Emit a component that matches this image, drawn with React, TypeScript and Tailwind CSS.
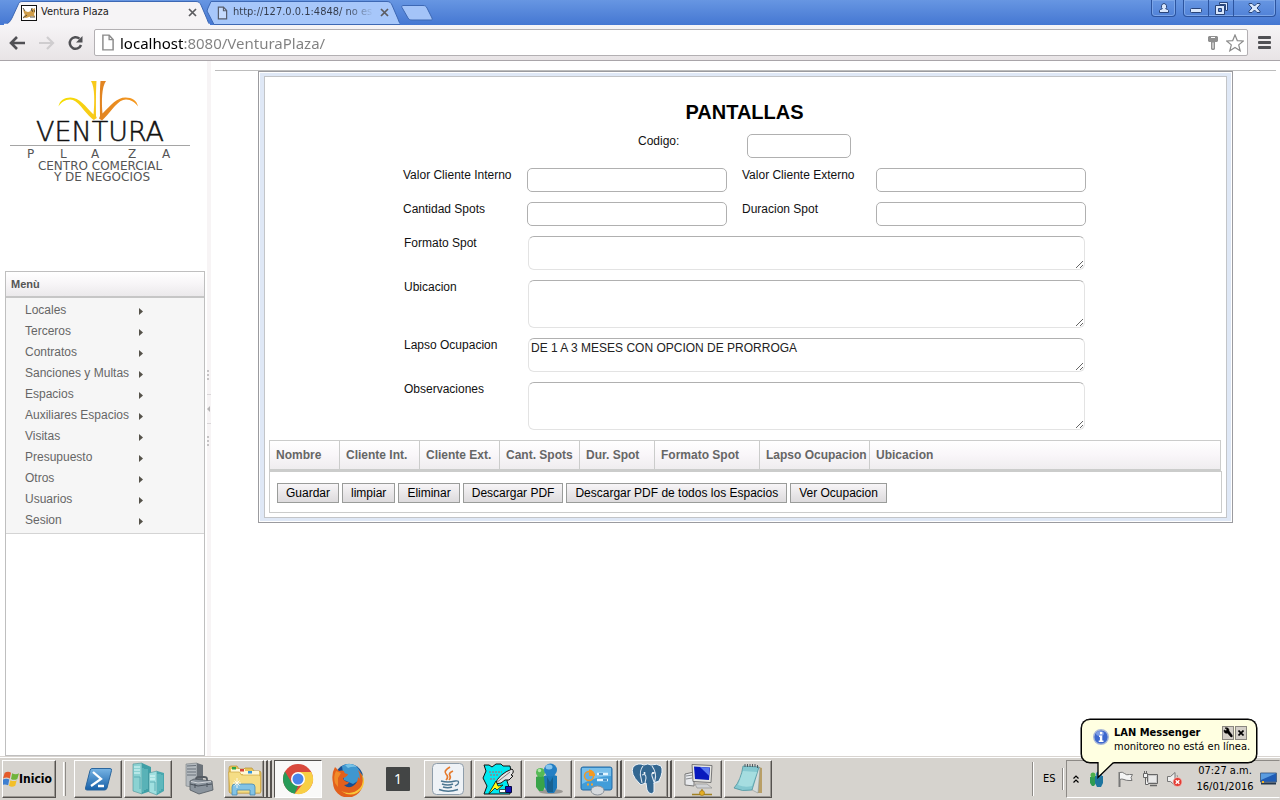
import type { ReactNode } from "react";

const MENU = [
  "Locales",
  "Terceros",
  "Contratos",
  "Sanciones y Multas",
  "Espacios",
  "Auxiliares Espacios",
  "Visitas",
  "Presupuesto",
  "Otros",
  "Usuarios",
  "Sesion",
];

const COLUMNS = [
  { title: "Nombre", width: "w-[70px]" },
  { title: "Cliente Int.", width: "w-20" },
  { title: "Cliente Ext.", width: "w-20" },
  { title: "Cant. Spots", width: "w-20" },
  { title: "Dur. Spot", width: "w-[75px]" },
  { title: "Formato Spot", width: "w-[105px]" },
  { title: "Lapso Ocupacion", width: "w-[110px]" },
  { title: "Ubicacion", width: "w-auto" },
];

const ACTIONS = [
  "Guardar",
  "limpiar",
  "Eliminar",
  "Descargar PDF",
  "Descargar PDF de todos los Espacios",
  "Ver Ocupacion",
];

const UI_FONT = "font-['DejaVu_Sans_Condensed','Noto_Sans',sans-serif]";

/* ---------- Browser chrome ---------- */

function CloseGlyph() {
  return (
    <svg viewBox="0 0 9 9" className="size-[9px]" aria-hidden="true">
      <path d="M1 1l7 7M8 1L1 8" stroke="#5b5b5f" strokeWidth="1.7" />
    </svg>
  );
}

function PageGlyph({ className, stroke }: { className: string; stroke: string }) {
  return (
    <svg viewBox="0 0 12 15" className={className} aria-hidden="true">
      <path d="M1.5 1h5.5l3.5 3.8V14h-9z" fill="#fff" fillOpacity=".35" stroke={stroke} strokeWidth="1.3" />
      <path d="M7 1v4h3.5" fill="none" stroke={stroke} strokeWidth="1.2" />
    </svg>
  );
}

function TitleBar() {
  return (
    <header className={`flex h-[25px] bg-linear-to-b from-[#6796e2] to-[#4577d2] text-[11px] ${UI_FONT}`}>
      <div className="relative ml-1 flex h-[25px] w-[204px] shrink-0 items-center pr-[11px] pl-[17px]">
        <svg viewBox="0 0 206 25" className="absolute top-0 left-0 h-[25px] w-[206px]" aria-hidden="true">
          <path d="M0 25C4 24 6 22 8 18L14 5C15 2 16 1.500 19 1.500H192C195 1.500 196 3 197 5L203 19C204 22 205 24 206 25z" fill="#f6f4f6" stroke="#3d68b4" strokeWidth="1" />
          <path d="M0 24.500H206" stroke="#f6f4f6" strokeWidth="1.500" />
        </svg>
        <svg viewBox="0 0 16 16" className="relative size-4" aria-hidden="true">
          <rect x=".5" y=".5" width="15" height="15" fill="#fff" stroke="#111" />
          <path d="M2 4l2 2 3 1 3-1 1-3 1 1 2-1 0 4-1 2 1 3-3-1-3 1-3 1-3-1 2-2-1-2z" fill="#cf9d4a" />
          <path d="M2 3l2 3M2 13l4-3M10 6l1-3M9 12l5 0" stroke="#4a4336" strokeWidth=".9" fill="none" />
          <path d="M11 6h1M13 6h1" stroke="#222" />
        </svg>
        <span className="relative ml-1 flex-1 text-[#222]">Ventura Plaza</span>
        <button type="button" aria-label="Cerrar Ventura Plaza" className="relative">
          <CloseGlyph />
        </button>
      </div>
      <div className="relative flex h-[25px] w-[190px] shrink-0 items-center pr-[9px] pl-[9px]">
        <svg viewBox="0 0 196 25" className="absolute top-0 -left-1 h-[25px] w-[196px]" aria-hidden="true">
          <path d="M4 8L7 1.500H183C186 1.500 187 3 188 5L194 19C195 22 196 24 197 24.500H10L3 11z" fill="#a7c7fa" stroke="#3d68b4" strokeWidth="1" />
        </svg>
        <PageGlyph className="relative h-[14px] w-[11px]" stroke="#555c6b" />
        <span className="relative ml-[5px] w-[141px] overflow-hidden bg-linear-to-r from-[#333b4b] from-80% to-[#a7c7fa] bg-clip-text whitespace-nowrap text-transparent">
          http://127.0.0.1:4848/ no es
        </span>
        <button type="button" aria-label="Cerrar pestaña" className="relative ml-auto">
          <CloseGlyph />
        </button>
      </div>
      <button type="button" aria-label="Nueva pestaña" className="mt-[5px] ml-[3px] h-4 w-8 shrink-0">
        <svg viewBox="0 0 32 16" className="h-4 w-8" aria-hidden="true">
          <path d="M2 .5H22C24 .5 25 1 26 3L31 13C31.500 14.500 31 15 30 15H11C9 15 8 14.500 7 13L1 2.500C.5 1 1 .5 2 .5z" fill="#a4c4f8" stroke="#3d68b4" />
        </svg>
      </button>
      <div className="ml-auto flex items-start pr-1">
        <button type="button" aria-label="Usuario" className="mr-[7px] flex h-[17px] w-[25px] items-center justify-center rounded-b-[4px] border border-t-0 border-[#2c549f] shadow-[inset_0_0_0_1px_#7ba5e8]">
          <svg viewBox="0 0 12 12" className="size-3" aria-hidden="true">
            <path d="M1.500 10.500V8.500Q2 7.200 4.300 6.800Q3 5.500 3.500 3.700Q4.200 1.500 6 1.500T8.500 3.700Q9 5.500 7.700 6.800Q10 7.200 10.500 8.500V10.500z" fill="#d9e7fc" stroke="#294479" />
          </svg>
        </button>
        <div className="flex h-[17px] divide-x divide-[#2c549f] overflow-hidden rounded-b-[4px] border border-t-0 border-[#2c549f] shadow-[inset_0_0_0_1px_#7ba5e8]">
          <button type="button" aria-label="Minimizar" className="flex w-[25px] items-center justify-center">
            <svg viewBox="0 0 12 12" className="size-3" aria-hidden="true">
              <rect x=".5" y="6.500" width="11" height="4" rx="1" fill="#d9e7fc" stroke="#294479" />
            </svg>
          </button>
          <button type="button" aria-label="Restaurar" className="flex w-[25px] items-center justify-center">
            <svg viewBox="0 0 13 13" className="size-[13px]" aria-hidden="true">
              <path d="M4.500.5h8v8h-2v-6h-6z" fill="#d9e7fc" stroke="#294479" />
              <path fillRule="evenodd" d="M1 3.500h8.500V12.500H.5V3.500zM3.500 6.500v3h3v-3z" fill="#d9e7fc" stroke="#294479" />
            </svg>
          </button>
          <button type="button" aria-label="Cerrar" className="flex w-[41px] items-center justify-center">
            <svg viewBox="0 0 13 12" className="h-3 w-[13px]" aria-hidden="true">
              <path d="M1 1.500h3L6.500 4 9 1.500h3v1.300L9 6l3 3.200v1.300H9L6.500 8 4 10.500H1V9.200L4 6 1 2.800z" fill="#d9e7fc" stroke="#294479" />
            </svg>
          </button>
        </div>
      </div>
    </header>
  );
}

function Toolbar() {
  return (
    <div className="flex h-9 items-center border-b border-[#a9a5a9] bg-linear-to-b from-[#f6f4f6] to-[#e8e4e6] pr-2 pl-[9px]">
      <button type="button" aria-label="Atrás">
        <svg viewBox="0 0 17 14" className="h-[14px] w-[17px]" aria-hidden="true">
          <path d="M8 1L2 7l6 6M2.500 7H16" fill="none" stroke="#505054" strokeWidth="2.600" />
        </svg>
      </button>
      <button type="button" aria-label="Adelante" className="ml-3">
        <svg viewBox="0 0 17 14" className="h-[14px] w-[17px]" aria-hidden="true">
          <path d="M9 1l6 6-6 6M14.500 7H1" fill="none" stroke="#cfcdcf" strokeWidth="2.200" />
        </svg>
      </button>
      <button type="button" aria-label="Recargar" className="ml-3">
        <svg viewBox="0 0 17 16" className="h-4 w-[17px]" aria-hidden="true">
          <path d="M12.500 3.700A5.800 5.800 0 1 0 14 10" fill="none" stroke="#505054" strokeWidth="2.500" />
          <path d="M15.500 1v6.500H9z" fill="#505054" />
        </svg>
      </button>
      <div className="ml-[10px] flex h-[27px] flex-1 items-center rounded-[2px] border border-[#b3b0b3] bg-white pr-[3px] pl-[6px]">
        <PageGlyph className="h-[17px] w-[14px]" stroke="#8b8b8b" />
        <input
          aria-label="Dirección"
          defaultValue="localhost:8080/VenturaPlaza/"
          className="ml-[5px] h-6 min-w-0 flex-1 bg-linear-to-r from-black from-[64px] to-[#808080] to-[64px] bg-clip-text font-['Noto_Sans',sans-serif] text-[15px] text-transparent outline-none"
        />
        <svg viewBox="0 0 10 16" className="h-4 w-[10px]" aria-hidden="true">
          <path fillRule="evenodd" d="M1 1h8l1 1v4L9 7H7v7l-1 1H4l-1-1V7H1L0 6V2zM3 2v1h4V2zM4.500 7.500v6h1v-6z" fill="#8f8f8f" />
        </svg>
        <button type="button" aria-label="Favoritos" className="ml-2">
          <svg viewBox="0 0 18 18" className="size-[18px]" aria-hidden="true">
            <path d="M9 1l2.300 5.600 6 .4-4.600 3.900 1.500 5.900L9 13.500l-5.200 3.300 1.500-5.900L.7 7l6-.4z" fill="#fff" stroke="#8a8a8a" strokeWidth="1.200" />
          </svg>
        </button>
      </div>
      <button type="button" aria-label="Menú de Chrome" className="ml-[10px] pr-px">
        <svg viewBox="0 0 13 13" className="size-[13px]" aria-hidden="true">
          <path d="M1 1.500h11M1 6.500h11M1 11.500h11" stroke="#505054" strokeWidth="2.800" strokeLinecap="round" />
        </svg>
      </button>
    </div>
  );
}

/* ---------- Page ---------- */

function Logo() {
  return (
    <svg viewBox="0 0 180 104" className="h-[104px] w-[180px]" role="img" aria-label="Ventura Plaza">
      <defs>
        <linearGradient id="gold" x1="0" x2="1">
          <stop offset="0" stopColor="#f5e000" />
          <stop offset="1" stopColor="#f8c81d" />
        </linearGradient>
        <linearGradient id="amber" x1="0" x2="1">
          <stop offset="0" stopColor="#e08322" />
          <stop offset="1" stopColor="#f79a1e" />
        </linearGradient>
      </defs>
      <path d="M81 2h5.500C85.800 12 86 26 86 37l.8 2-3 2-2-1.500C74 33 68 20.500 60 20.500c-5 0-9 3-11.500 7 1-6 6-9 12-9 9 0 15 9 23 17C84.500 24 85 8 81 2z" fill="url(#gold)" />
      <path d="M96 2h-5.500c-1 10-.5 24-.5 35l-1 2.500 3 2 2-2c8-8 14-19 22-19 5 0 9 3 12 7-1-6-6-9-12.500-9-9 0-15 8-23 16C91.500 23 91.500 8 96 2z" fill="url(#amber)" />
      <text x="90" y="62" textAnchor="middle" fontSize="27" fontFamily="'DejaVu Sans',sans-serif" fontWeight="200" fill="#111" stroke="#111" strokeWidth=".5">
        VENTURA
      </text>
      <path d="M0 66.500H180" stroke="#a5a5a5" />
      <g fontFamily="'DejaVu Sans',sans-serif" fontSize="12" fill="#555">
        <text x="17" y="79">P</text>
        <text x="50" y="79">L</text>
        <text x="81" y="79">A</text>
        <text x="118" y="79">Z</text>
        <text x="152" y="79">A</text>
        <text x="90" y="91" textAnchor="middle">
          CENTRO COMERCIAL
        </text>
        <text x="92" y="102" textAnchor="middle">
          Y DE NEGOCIOS
        </text>
      </g>
    </svg>
  );
}

function Sidebar() {
  return (
    <aside className="flex w-[205px] shrink-0 flex-col pl-[5px]">
      <div className="h-[210px] pt-[18px] pl-[5px]">
        <Logo />
      </div>
      <nav aria-label="Menù" className="flex-1 border border-[#bfbfbf]">
        <h2 className="h-[26px] border-b-2 border-[#c6c6c6] bg-linear-to-b from-white via-[#f7f5f7] to-[#ebe9eb] pl-[5px] text-[11px] leading-[25px] font-bold text-[#555]">
          Menù
        </h2>
        <ul className="border-b border-[#d4d4d4] bg-[#f6f6f6] pt-px pb-[3px]">
          {MENU.map((item) => (
            <li key={item}>
              <a href="#" className="flex h-[21px] items-center pl-[19px] text-xs text-[#666]">
                <span className="w-[114px] whitespace-nowrap">{item}</span>
                <svg viewBox="0 0 4 7" className="mt-[3px] h-[7px] w-1" aria-hidden="true">
                  <path d="M0 0l4 3.500L0 7z" fill="#55524a" />
                </svg>
              </a>
            </li>
          ))}
        </ul>
      </nav>
    </aside>
  );
}

function Splitter() {
  return (
    <div className="flex w-1.5 shrink-0 flex-col items-end">
      <div className="flex w-1 flex-1 flex-col items-start bg-[#f7f4f5] pt-[309px]">
        <svg viewBox="0 0 4 76" className="h-[76px] w-1" aria-hidden="true">
          <path d="M0 0h2v2H0zM0 4h2v2H0zM0 8h2v2H0zM0 66h2v2H0zM0 70h2v2H0zM0 74h2v2H0z" fill="#c5c3c4" />
          <path d="M0 24.500h4M0 53.500h4" stroke="#d9d6d8" />
          <path d="M3 36v6L0 39z" fill="#b5b3b4" />
        </svg>
      </div>
    </div>
  );
}

function TextField({ id, label }: { id: string; label: string }) {
  return (
    <>
      <label htmlFor={id} className="leading-[14px]">
        {label}
      </label>
      <input id={id} className="h-6 w-full rounded-[5px] border border-[#b0b0b0] bg-white px-1 outline-none" />
    </>
  );
}

function TextArea({ id, label, tall, value }: { id: string; label: string; tall?: boolean; value?: string }) {
  return (
    <>
      <label htmlFor={id} className="leading-[14px]">
        {label}
      </label>
      <textarea
        id={id}
        defaultValue={value}
        className={`${tall ? "h-12" : "h-[34px]"} block w-full resize rounded-[6px] border border-[#e3e3e3] border-t-[#b0b0b0] bg-white p-0.5 leading-[14px] text-[#222] outline-none`}
      />
    </>
  );
}

function ScreensForm() {
  return (
    <form className="mx-auto w-[975px] max-w-full border border-[#9b9b9f] p-px" onSubmit={(e) => e.preventDefault()}>
      <div className="bg-[#dfe8f6] px-1 py-[3px]">
        <div className="border border-[#c3c5c8] bg-white px-1 pt-[23px] pb-1 text-xs text-[#111]">
          <div className="flex flex-col items-center gap-[10px] pr-0.5">
            <h1 className="h-6 text-[20px] leading-6 font-bold text-black">PANTALLAS</h1>
            <div className="grid grid-cols-[109px_104px]">
              <TextField id="codigo" label="Codigo:" />
            </div>
            <div className="grid grid-cols-[124px_200px_15px_134px_210px] gap-y-[10px]">
              <TextField id="interno" label="Valor Cliente Interno" />
              <span />
              <TextField id="externo" label="Valor Cliente Externo" />
              <TextField id="cantidad" label="Cantidad Spots" />
              <span />
              <TextField id="duracion" label="Duracion Spot" />
            </div>
            <div className="grid grid-cols-[124px_557px] gap-y-[10px]">
              <TextArea id="formato" label="Formato Spot" />
              <TextArea id="ubicacion" label="Ubicacion" tall />
              <TextArea id="lapso" label="Lapso Ocupacion" value="DE 1 A 3 MESES CON OPCION DE PRORROGA" />
              <TextArea id="observaciones" label="Observaciones" tall />
            </div>
          </div>
          <div className="mt-[10px] pr-px">
            <table className="w-full table-fixed border-separate border-spacing-0 border-b border-[#cbcccb]">
              <thead>
                <tr>
                  {COLUMNS.map((c) => (
                    <th
                      key={c.title}
                      scope="col"
                      className={`${c.width} h-[30px] border-t border-b border-l border-[#cbcccb] bg-linear-to-b from-white via-[#f9f6f9] to-[#efedef] p-0 pl-1.5 text-left font-bold whitespace-nowrap text-[#666] last:border-r`}
                    >
                      {c.title}
                    </th>
                  ))}
                </tr>
              </thead>
            </table>
          </div>
          <div className="flex h-[42px] flex-wrap items-center gap-[3px] border border-[#cbcccb] px-[7px] pt-0.5">
            {ACTIONS.map((a) => (
              <button
                key={a}
                type="button"
                className="h-5 border border-[#9a9c9a] bg-linear-to-b from-[#f7f5f7] to-[#dddbdd] px-2 leading-[18px] whitespace-nowrap text-black"
              >
                {a}
              </button>
            ))}
          </div>
        </div>
      </div>
    </form>
  );
}

/* ---------- Task bar ---------- */

function TaskButton({
  label,
  kind = "raised",
  stack = 0,
  children,
}: {
  label: string;
  kind?: "raised" | "flat" | "pressed";
  stack?: number;
  children: ReactNode;
}) {
  const look = {
    raised: "border-t-white border-l-white border-r-[#55524f] border-b-[#55524f] shadow-[inset_-1px_-1px_0_#9a9792]",
    flat: "border-transparent",
    pressed: "border-t-[#55524f] border-l-[#55524f] border-r-white border-b-white bg-[#f9f9f8]",
  }[kind];
  return (
    <button type="button" aria-label={label} className="flex h-[38px] w-12 shrink-0">
      <span className={`flex h-[38px] min-w-0 flex-1 overflow-hidden border ${look}`}>
        <svg viewBox="0 0 46 36" className="h-9 w-[46px] shrink-0" aria-hidden="true">
          {children}
        </svg>
      </span>
      {Array.from({ length: stack }, (_, i) => (
        <span key={i} className="h-[38px] w-1 border-t border-r-2 border-b border-t-white border-r-[#55524f] border-b-[#55524f]" />
      ))}
    </button>
  );
}

function TaskIcons() {
  return (
    <div className="flex gap-0.5">
      <TaskButton label="PowerShell">
        <defs>
          <linearGradient id="ps" x1="0" y1="0" x2="0" y2="1">
            <stop offset="0" stopColor="#78b4e4" />
            <stop offset="1" stopColor="#155fa8" />
          </linearGradient>
        </defs>
        <path d="M17 7.500h18q2 0 1.500 2l-4.500 17.500q-.5 2-2.500 2H12q-2 0-1.500-2L15 9.500q.5-2 2-2z" fill="url(#ps)" stroke="#2b669d" />
        <path d="M18 11l8 7-10 7M23 25h6" fill="none" stroke="#fff" strokeWidth="2.300" />
      </TaskButton>
      <TaskButton label="Servidores">
        <path d="M8 3l9-1v31l-9-3z" fill="#8bd2d2" stroke="#4a9297" strokeWidth=".6" />
        <path d="M17 2l9 4v24l-9 3z" fill="#3f9fa6" />
        <path d="M24 12l8-2v24l-8-3z" fill="#a0e0e0" stroke="#4a9297" strokeWidth=".6" />
        <path d="M32 10l7 2v18l-7 4z" fill="#48a7ae" />
        <path d="M9 6h6M9 9h6M9 12h6M25 15h5M25 18h5" stroke="#e1fbfb" strokeWidth="1.200" />
        <path d="M9 16h6v12M25 21h5v9" fill="none" stroke="#5daeb4" />
        <path d="M18 7v24M20 8v21M22 8v20M33 13v19M35 13v17M37 14v14" stroke="#81cfd2" strokeWidth=".8" />
      </TaskButton>
      <TaskButton label="Administrador del servidor" kind="flat">
        <path d="M11 3l11-1v25l-11-2z" fill="#b4babf" stroke="#777d82" strokeWidth=".6" />
        <path d="M22 2l6 2v20l-6 2z" fill="#6c737a" />
        <path d="M12 5l9-.5M12 8h9M12 11h9M12 14h9" stroke="#68717a" strokeWidth="1.200" />
        <path d="M21 20v-2q0-2 3-2h5q3 0 3 2v3" fill="none" stroke="#555b62" strokeWidth="1.800" />
        <path d="M15 20l4-2 18 2 1 9-14 4-9-4z" fill="#8b949d" stroke="#515860" strokeWidth=".8" />
        <path d="M15 23l8 2 14-2M20 23v4M32 22v4" stroke="#4b535c" fill="none" strokeWidth="1.100" />
        <path d="M16 20.500l7 1.500 13-1.500" stroke="#d4d8dc" fill="none" />
      </TaskButton>
      <TaskButton label="Explorador de Windows" stack={2}>
        <path d="M4 7q0-2 2-2h6l2 3h5l1-1h7l2 3h5q2 0 2 2v18q0 2-2 2H6q-2 0-2-2z" fill="#e7c55d" stroke="#b98f2d" strokeWidth=".7" />
        <path d="M6 8h14v5H6zM18 10h16v5H18z" fill="#fff8d4" />
        <rect x="7" y="6" width="4" height="2.500" fill="#2da44a" />
        <rect x="15" y="8" width="4" height="2.500" fill="#d84335" />
        <rect x="23" y="10" width="4" height="2.500" fill="#3096dc" />
        <path d="M3.500 11h11l2 3h17q2 0 2 2V32H5z" fill="#f5dd85" stroke="#cda543" strokeWidth=".7" />
        <path d="M7 34V26q0-3 3-3h17q3 0 3 3v8h-5v-5H12v5z" fill="#83c3e5" stroke="#4589b4" strokeWidth=".8" />
        <path d="M12 17v10M8 22h8M9.500 19.500l5 5M14.500 19.500l-5 5" stroke="#fffef0" strokeWidth=".9" />
      </TaskButton>
      <TaskButton label="Google Chrome" kind="pressed">
        <circle cx="23" cy="18" r="15" fill="#d9493c" />
        <path d="M10 10.500L16.500 21.500 23 25 19.700 32.700A15 15 0 0 1 10 10.500z" fill="#279b58" />
        <path d="M23 11h13.300A15 15 0 0 1 19.700 32.700L29 21.500z" fill="#f8cf45" />
        <circle cx="23" cy="18" r="7" fill="#fff" />
        <circle cx="23" cy="18" r="5.500" fill="#4a84ea" />
      </TaskButton>
      <TaskButton label="Firefox" kind="flat">
        <circle cx="24" cy="17" r="14" fill="#194e91" />
        <path d="M17 5q8-5 15 1 5 5 4 12l-8 5-9-4z" fill="#3f97cf" />
        <path d="M20 4q7-3 12 2-5-1-9 1z" fill="#77c2e6" />
        <path d="M10 6l4 4q3-1 5 0 0 3 4 3-1 3-5 4 1 4 6 4-1 3-5 3 4 4 9 1 5-3 5-9l2 2q0-5-2-9 5 4 5 12A15 15 0 0 1 8 22Q6 13 10 6z" fill="#e2601c" />
        <path d="M36 12q4 9-1 15-8 8-19 3 8 6 16 2 8-5 7-14-1-3-3-6z" fill="#f9c73a" />
        <path d="M11 10q-3 6-1 12l3 4 0-9 3-5z" fill="#f28b28" />
      </TaskButton>
      <TaskButton label="Escritorio 1" kind="flat">
        <rect x="11" y="6" width="24" height="24" rx="1" fill="#434545" />
        <text x="23" y="23" textAnchor="middle" fontSize="14" fontFamily="'Noto Sans',sans-serif" fill="#fff">
          1
        </text>
      </TaskButton>
      <TaskButton label="Java">
        <rect x="7.500" y="2.500" width="31" height="31" rx="4" fill="#eef2f6" stroke="#8e9daa" />
        <path d="M25 6q-7 4-4 7 3 3 0 6M28 10q-5 2-3 5 1 2-1 4" fill="none" stroke="#e57a2d" strokeWidth="1.700" />
        <path d="M16 20q7 2 14 0M17 23q6 2 11 0M18 26q5 1.500 9 0M14 28.500q9 3.500 19 0" fill="none" stroke="#4b7590" strokeWidth="1.500" />
        <path d="M30 20q5-1 3 3-1 1-3 2" fill="none" stroke="#4b7590" strokeWidth="1.300" />
      </TaskButton>
      <TaskButton label="Editor">
        <path d="M9 4h5l3 2 4-3h5l2 2h7q2 4-1 8l-2 7 3 9 0 4H9l3-8-4-8 3-7z" fill="#00e8f0" stroke="#111" />
        <path d="M14 11h13M15 14h8M15 18h6" stroke="#d0525b" strokeDasharray="2 1" />
        <path d="M20 23q4-10 17-15 3 3-1 6l2 1-4 4-4 0q-3 4-10 4z" fill="#e4e4e4" stroke="#111" />
        <path d="M21 22l14-11" stroke="#777" />
        <path d="M14 32l7-12 2 5 5-1-6 5-2-2-6 6z" fill="#ffff18" stroke="#111" strokeWidth=".8" />
        <path d="M30.500 25.500h6v6h-6z" fill="#1212b6" stroke="#080840" />
        <path d="M24.500 28.500h6v3h-6z" fill="#fff" stroke="#111" strokeWidth=".7" />
      </TaskButton>
      <TaskButton label="LAN Messenger">
        <ellipse cx="26" cy="30.500" rx="12" ry="2.500" fill="#9b9894" />
        <path d="M11 16q5-3 9 0v10l-2 4h-4l-3-4z" fill="#39a44a" />
        <circle cx="15.500" cy="11.500" r="4.500" fill="#55ba56" />
        <path d="M19 15q7-3 13 0v12l-3 5h-6l-3-5z" fill="#1b78b9" />
        <path d="M22 16l3 5 3-5v15h-6z" fill="#176191" />
        <circle cx="25.500" cy="9" r="6.500" fill="#247fc4" />
        <ellipse cx="24" cy="6" rx="3.500" ry="2.500" fill="#86c5ed" />
        <circle cx="14.500" cy="9.500" r="1.700" fill="#afe6a8" />
      </TaskButton>
      <TaskButton label="Panel de control" stack={1}>
        <rect x="6" y="6" width="31" height="23" rx="2" fill="#419dd9" stroke="#2669a2" />
        <path d="M7 7h29v8q-14 0-29 8z" fill="#78bfeb" />
        <circle cx="14" cy="15" r="4.500" fill="#62afe5" stroke="#f39a24" strokeWidth="1.500" />
        <path d="M14 15V8.500A6 6 0 0 1 20 15z" fill="#f39a24" />
        <path d="M22 13h11M22 19h11" stroke="#e3f5ff" strokeWidth="2.500" />
        <path d="M24 13h4M28 19h4" stroke="#1e73b5" strokeWidth="1.500" />
        <path d="M12 23.500h2M16 23.500h2" stroke="#f5a12f" strokeWidth="2" />
        <ellipse cx="22.500" cy="29.500" rx="6.500" ry="4.500" fill="#d7dadd" stroke="#899098" />
      </TaskButton>
      <TaskButton label="PostgreSQL" stack={1}>
        <path d="M8 6q5-5 11-2 4-2 7 0 6-2 10 1 3 5-2 15l-5 2v9q-2 3-5 1l-2-3-1-7-3 1q-2 2-4-1Q5 13 8 6z" fill="#336791" stroke="#eef3f8" strokeWidth="1" />
        <path d="M18 5q-4 5-2 12l1 5M27 5q5 7 3 14l-1 4M17 14q4-2 4 3l-1 5M30 12q-4-1-3 3l2 6q3 1 6-1" fill="none" stroke="#dce6f0" strokeWidth="1.100" />
        <circle cx="19.500" cy="12" r="1" fill="#fff" />
        <circle cx="28" cy="12" r="1" fill="#fff" />
      </TaskButton>
      <TaskButton label="Escritorio remoto">
        <path d="M10 13l9-2v14l-9-1z" fill="#e8eaed" stroke="#777" />
        <path d="M11 15l7-1M11 18l6-1" stroke="#8a8d91" />
        <path d="M17 3.500l20 1-1 17-18-1z" fill="#e7e7e2" stroke="#777" />
        <path d="M19 5.500l16 1-1 12.500-14-1z" fill="#0719bd" />
        <path d="M25 6L34.500 6.700l-.5 8z" fill="#5a79f0" />
        <path d="M20 23h12l5 4-15 0z" fill="#d1d3d6" stroke="#888" strokeWidth=".6" />
        <path d="M17 33.500h20M27 28v5" stroke="#a18122" strokeWidth="1.300" />
        <circle cx="27" cy="32" r="2.500" fill="#e6af23" stroke="#966b10" strokeWidth=".6" />
      </TaskButton>
      <TaskButton label="Bloc de notas">
        <path d="M34 6l3 1 0 25-4 0z" fill="#b99f66" />
        <path d="M19 6l16 1-2 25-6-3z" fill="#d7dcda" stroke="#8b9393" strokeWidth=".6" />
        <path d="M18 5l16 1-7 23q-10 2-18-2 7-8 9-22z" fill="#84c8d0" stroke="#448c98" strokeWidth=".7" />
        <path d="M18 10l14 1-5 14q-7 2-14-1z" fill="#a5dde0" />
        <path d="M20 3v3M22.500 3v3M25 3v3M27.500 3v3M30 3v3M32.500 4v3" stroke="#4f5960" />
      </TaskButton>
    </div>
  );
}

function Balloon() {
  return (
    <div
      role="status"
      className="absolute right-[22px] bottom-[34px] h-11 w-44 rounded-[9px] border border-black bg-[#ffffe1] pt-[6px] text-[11px] leading-[14px] text-black shadow-[0_0_0_0.5px_black]"
    >
      <div className="flex pr-[9px] pl-[11px]">
        <svg viewBox="0 0 16 16" className="mt-[3px] size-4 shrink-0" aria-hidden="true">
          <circle cx="8" cy="8" r="7.300" fill="#3d68ce" stroke="#a9b8d8" strokeWidth="1.400" />
          <ellipse cx="7" cy="4.500" rx="4" ry="2.500" fill="#7e9de5" />
          <path d="M7 3h2.300v2.200H7zM6 6.500h3.300v5h1.200V13H5.700v-1.500h1.200V8H6z" fill="#fff" />
        </svg>
        <div className="ml-[5px] min-w-0 flex-1">
          <div className="flex">
            <strong className="flex-1 whitespace-nowrap">LAN Messenger</strong>
            <button type="button" aria-label="Configurar" className="flex h-[14px] w-3 items-center justify-center border border-[#8a8780] bg-[#d4d0c8]">
              <svg viewBox="0 0 10 12" className="h-3 w-[10px]" aria-hidden="true">
                <path d="M1 3l2 1 1-2-2-1q4-1 4 3l3 4q1 2-1 2L4.500 6Q1 7 1 3z" fill="#000" stroke="#000" strokeWidth=".6" />
              </svg>
            </button>
            <button type="button" aria-label="Cerrar aviso" className="ml-px flex h-[14px] w-3 items-center justify-center border border-[#8a8780] bg-[#d4d0c8]">
              <svg viewBox="0 0 6 6" className="size-1.5" aria-hidden="true">
                <path d="M.5.5l5 5M5.500.5l-5 5" stroke="#000" strokeWidth="1.600" />
              </svg>
            </button>
          </div>
          <p className="whitespace-nowrap">monitoreo no está en línea.</p>
        </div>
      </div>
      <svg viewBox="0 0 18 18" className="absolute top-[41px] left-[15px] size-[18px]" aria-hidden="true">
        <path d="M1 0V16.500L16.500 1.500V0z" fill="#ffffe1" />
        <path d="M1 1V16.500L16.500 1.500" fill="none" stroke="#000" strokeWidth="1.300" />
      </svg>
    </div>
  );
}

function Tray() {
  return (
    <div className="ml-auto flex h-[38px] shrink-0 items-center text-[11px] text-black">
      <span className="h-[34px] w-0.5 border-r border-l border-r-white border-l-[#8d8a86]" />
      <span className="ml-[9px] w-[15px]">ES</span>
      <span className="ml-1 h-[22px] w-0.5 border-r border-l border-r-white border-l-[#8d8a86]" />
      <div className="relative ml-0.5 flex h-[38px] w-[214px] items-center border border-[#8d8a86] border-r-transparent border-b-white pr-0.5 pl-1.5">
        <button type="button" aria-label="Mostrar iconos ocultos">
          <svg viewBox="0 0 6 8" className="h-2 w-1.5" aria-hidden="true">
            <path d="M.5 3.500L3 1l2.500 2.500M.5 7.500L3 5l2.500 2.500" fill="none" stroke="#000" strokeWidth="1.200" />
          </svg>
        </button>
        <svg viewBox="0 0 16 16" className="ml-[10px] size-4" aria-hidden="true">
          <path d="M1 6h6v6l-2 3H3l-2-3z" fill="#2f9b52" />
          <circle cx="4" cy="4" r="2.500" fill="#4cb04c" />
          <path d="M6 5h8v7l-2 4H8l-2-4z" fill="#1e759f" />
          <circle cx="10" cy="3.500" r="3" fill="#2b83ba" />
        </svg>
        <svg viewBox="0 0 18 16" className="ml-3 h-4 w-[18px]" aria-hidden="true">
          <path d="M2.500 1v15" stroke="#777" strokeWidth="2" />
          <path d="M2.500 1.500q3-1 5 1t5 1l3 0-1.500 3 1 3-3 0q-3 0-5-1t-4.500 0z" fill="#f4f4f4" stroke="#777" />
        </svg>
        <svg viewBox="0 0 17 16" className="ml-[7px] h-4 w-[17px]" aria-hidden="true">
          <path d="M5.500 3.500h10v9h-10z" fill="#c9c9c9" stroke="#666" />
          <path d="M7 5h7v6H7z" fill="#e9e9e9" />
          <path d="M8 14.500h7" stroke="#666" strokeWidth="1.500" />
          <path d="M1.500 2.500h4v4h-4zM2.500 0v2.500M4.500 0v2.500M3.500 6.500v7h3" fill="#f2f2f2" stroke="#666" />
        </svg>
        <svg viewBox="0 0 17 16" className="ml-[7px] h-4 w-[17px]" aria-hidden="true">
          <path d="M1.500 5.500h3L9 1.500v13L4.500 10.500h-3z" fill="#f0f0f0" stroke="#777" />
          <path d="M11 4q2 3 0 7" fill="none" stroke="#999" />
          <circle cx="11.500" cy="11" r="4.500" fill="#e33b32" stroke="#f2c8c4" strokeWidth=".8" />
          <path d="M9.700 9.200l3.600 3.600M13.300 9.200l-3.600 3.600" stroke="#fff" strokeWidth="1.400" />
        </svg>
        <time className="ml-auto w-[60px] text-center leading-4 whitespace-nowrap">
          07:27 a.m.
          <br />
          16/01/2016
        </time>
        <svg viewBox="0 0 17 14" className="ml-[5px] h-[14px] w-[17px] shrink-0" aria-hidden="true">
          <path d="M.5 1h16v9H.5z" fill="#205cb4" stroke="#4a6788" />
          <path d="M1 1.500h15L1 8z" fill="#5a9ce0" />
          <path d="M1 11.500h15" stroke="#23364c" strokeWidth="2" />
          <path d="M2 9h2v2H2z" fill="#f0b429" />
        </svg>
        <Balloon />
      </div>
    </div>
  );
}

function Taskbar() {
  return (
    <footer className={`flex h-11 items-start border-t border-[#d8d4d0] bg-[#d6d3ce] pt-[3px] pl-0.5 shadow-[inset_0_1px_0_#fff] ${UI_FONT}`}>
      <button
        type="button"
        className="flex h-[38px] w-[54px] shrink-0 items-center border border-t-white border-r-[#55524f] border-b-[#55524f] border-l-white text-[12px] font-bold text-black shadow-[inset_-1px_-1px_0_#9a9792]"
      >
        <svg viewBox="1 1 14 14" className="size-4 shrink-0" aria-hidden="true">
          <path d="M2.500 2.500q3-1.500 5.500 0L7 7.500q-3-1.500-6 0z" fill="#e45b2b" />
          <path d="M9 3q3 1.500 6 0l-1.500 5q-3 1.500-5.500 0z" fill="#6fb43a" />
          <path d="M1 8.500q3-1.500 5.500 0l-1 5q-3-1.500-5.500 0z" fill="#3e7fd0" />
          <path d="M7.500 9q3 1.500 5.500 0l-1.300 5q-3 1.500-5.500 0z" fill="#f3bf28" />
        </svg>
        <span>Inicio</span>
      </button>
      <span className="mt-0.5 mr-2 ml-[7px] h-[34px] w-[3px] border-r border-l border-r-[#8d8a86] border-l-white bg-[#e6e4e0]" />
      <TaskIcons />
      <Tray />
    </footer>
  );
}

export default function App() {
  return (
    <div className="flex min-h-screen flex-col bg-white font-['Liberation_Sans',Arial,sans-serif]">
      <TitleBar />
      <Toolbar />
      <div className="flex flex-1">
        <Sidebar />
        <Splitter />
        <main className="min-w-0 flex-1 px-1 pt-[9px]">
          <div className="h-px bg-[#bdbdbd]" />
          <ScreensForm />
        </main>
      </div>
      <Taskbar />
    </div>
  );
}
